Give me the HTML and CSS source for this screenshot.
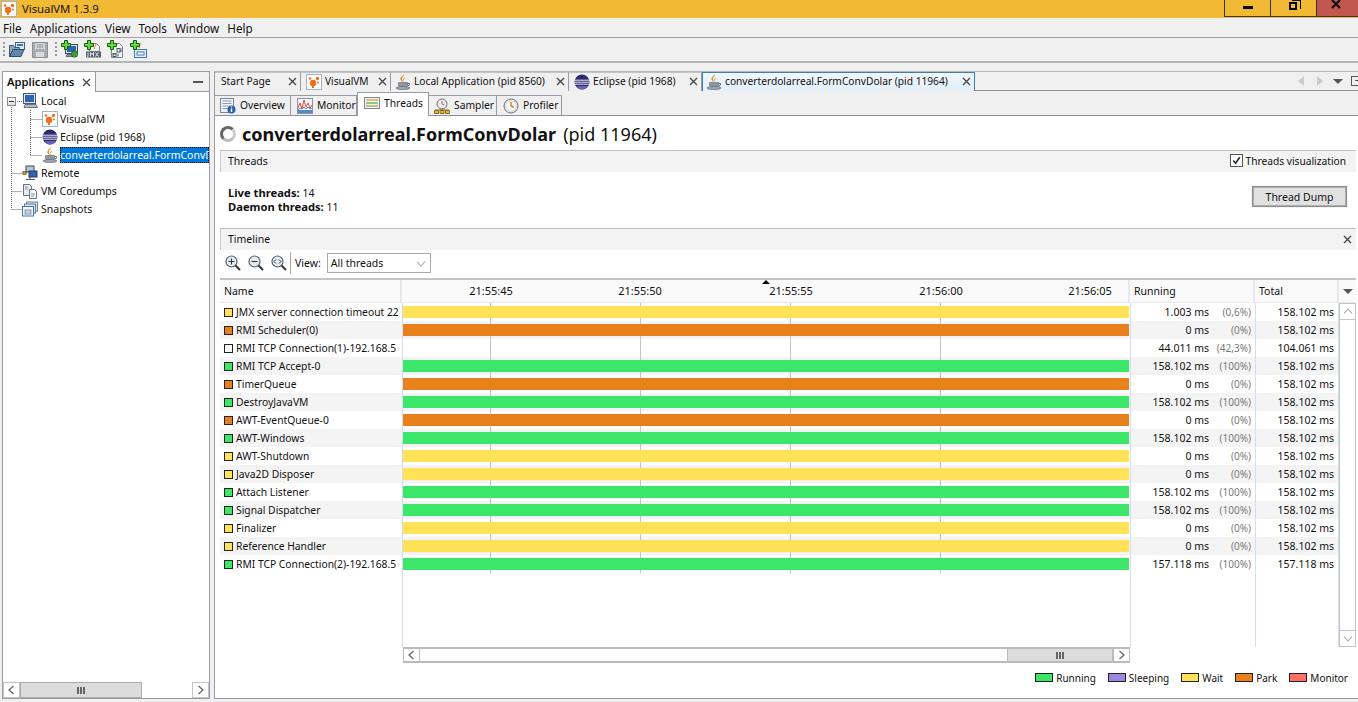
FILE: index.html
```html
<!DOCTYPE html>
<html lang="en">
<head>
<meta charset="utf-8">
<title>VisualVM 1.3.9</title>
<link rel="stylesheet" href="styles.css">
</head>
<body>
<svg class="defs" width="0" height="0" aria-hidden="true">
  <defs>
    <symbol id="i-vm" viewBox="0 0 16 16"><rect x=".5" y=".5" width="15" height="15" fill="#fff" stroke="#9fb4c8"/><circle cx="7" cy="9" r="3.2" fill="#ee6f1c"/><circle cx="11.5" cy="4.5" r="1.7" fill="#ee6f1c"/><circle cx="4" cy="4.5" r="1.3" fill="#ee6f1c"/><circle cx="12" cy="8.5" r="1" fill="#ee6f1c"/><path d="M7 11v3" stroke="#ee6f1c" stroke-width="2"/></symbol>
    <symbol id="i-java" viewBox="0 0 16 16"><path d="M9 0c1 2-3 3-2 6 .4 1 1 1.500 1 2-1-.5-3-1.500-2.600-3.500C5.800 2.500 8.500 2 9 0z" fill="#e8801c"/><path d="M10 3.500c0 1.500-2 2-1 4.500-.8-.5-1.500-2-.7-3 .5-.6 1.200-1 1.700-1.500z" fill="#e8a01c"/><path d="M3.500 8.500h9v2.500c0 1.500-2 2.500-4.500 2.500s-4.500-1-4.500-2.500z" fill="#8d98a4" stroke="#5d6670" stroke-width=".6"/><ellipse cx="8" cy="14" rx="7" ry="1.600" fill="#9aa4ae" stroke="#5d6670" stroke-width=".6"/><path d="M12.500 9.500h2v1.500l-2 1" fill="none" stroke="#5d6670"/></symbol>
    <symbol id="i-eclipse" viewBox="0 0 16 16"><circle cx="8" cy="8" r="7.500" fill="#2c2a6e"/><path d="M1 6.200h14M.6 8.200h14.800M1 10.200h14" stroke="#e8e8f4" stroke-width="1"/><path d="M2 12h12c-1.500 2-3.500 3.500-6 3.500S3.500 14 2 12z" fill="#6a60b8"/></symbol>
    <symbol id="i-local" viewBox="0 0 16 16"><rect x="1.500" y=".5" width="12" height="10" fill="#dfe6ee" stroke="#4a5868"/><rect x="3" y="2" width="9" height="7" fill="#2f63b5"/><path d="M3 11.500h11l1.500 3H2z" fill="#b8bec6" stroke="#4a5868" stroke-width=".8"/></symbol>
    <symbol id="i-remote" viewBox="0 0 16 16"><path d="M0 8h5M8 11v4M4 14.500h9" stroke="#556" stroke-width="1"/><rect x="4" y="1" width="8" height="6" fill="#b8c6d8" stroke="#3d4a5a"/><rect x="7" y="6" width="8" height="6" fill="#2f63b5" stroke="#2d3a4a"/><rect x="1" y="6.500" width="3" height="3" fill="#d9942a" stroke="#6a4a10" stroke-width=".6"/></symbol>
    <symbol id="i-core" viewBox="0 0 16 16"><path d="M1.500 1.500h6l2 2v9h-8z" fill="#e8ebef" stroke="#6a7480"/><path d="M7.500 6.500h5l2 2v7h-7z" fill="#f4f6f8" stroke="#6a7480"/><path d="M3 4h3M3 6h3M9 11h4M9 13h3" stroke="#8a94a0"/></symbol>
    <symbol id="i-snap" viewBox="0 0 16 16"><rect x="4.500" y="1" width="11" height="9" fill="#e3e9f0" stroke="#6a7c90"/><rect x="2.500" y="3" width="11" height="9" fill="#dde6f0" stroke="#5a7ca0"/><rect x=".5" y="5.500" width="11" height="9.500" fill="#f0f4f8" stroke="#3f78b0"/><rect x="3" y="9" width="6" height="4" fill="#c8d4e0" stroke="#6a7c90" stroke-width=".7"/></symbol>
    <symbol id="i-overview" viewBox="0 0 16 16"><rect x=".5" y=".5" width="13" height="14" fill="#eef1f4" stroke="#7b8794"/><path d="M2.500 3h9M2.500 5.500h9M2.500 8h6M2.500 10.500h5" stroke="#8ea0b2"/><circle cx="11.500" cy="11.500" r="4" fill="#2a5fb0"/><path d="M11.500 10.500v3.500" stroke="#fff" stroke-width="1.500"/><path d="M11.500 8.500v1" stroke="#fff" stroke-width="1.300"/></symbol>
    <symbol id="i-monitor" viewBox="0 0 16 16"><rect x=".5" y=".5" width="15" height="15" fill="#f3f5f8" stroke="#8794a4"/><path d="M1 10l2-5 2 6 2-9 2 7 2-4 2 5 2-3" fill="none" stroke="#d8503a"/><path d="M1 15v-3h14v3z" fill="#5a86c8"/><path d="M1 12l2-2 2 1 2-2 2 2 2-2 2 2 2-1" fill="none" stroke="#5a86c8"/></symbol>
    <symbol id="i-threads" viewBox="0 0 16 16"><rect x=".5" y="2.500" width="15" height="11" fill="#f3f5f3" stroke="#7b8794"/><path d="M2 5h12" stroke="#e8a01c" stroke-width="1.300"/><path d="M2 8h12" stroke="#46b060" stroke-width="1.300"/><path d="M2 11h12" stroke="#b0a050" stroke-width="1.300"/></symbol>
    <symbol id="i-sampler" viewBox="0 0 16 16"><circle cx="8" cy="6" r="5" fill="#e8ecf0" stroke="#68737f"/><path d="M8 3v3l2 1" fill="none" stroke="#c8542a"/><path d="M1 12h14M8 10v2" stroke="#8a6a20"/><path d="M.5 12.500h4v3h-4zM6 12.500h4v3H6zM11.500 12.500h4v3h-4z" fill="#e8b840" stroke="#8a6a20"/></symbol>
    <symbol id="i-profiler" viewBox="0 0 16 16"><circle cx="8" cy="8" r="7" fill="#eef1f4" stroke="#68737f"/><circle cx="8" cy="8" r="5.300" fill="#fbfbfb" stroke="#b8c0c8" stroke-width=".6"/><path d="M8 4v4l3 1.500" fill="none" stroke="#e07a20" stroke-width="1.400"/></symbol>
    <symbol id="i-close" viewBox="0 0 9 9"><path d="M1 1l7 7M8 1l-7 7" stroke="#444" stroke-width="1.300" fill="none"/></symbol>
    <symbol id="i-folder" viewBox="0 0 16 16"><rect x="6.500" y=".5" width="9" height="7" fill="#dfe8f0" stroke="#46627e"/><path d="M8 3h6" stroke="#3b78b8" stroke-width="2"/><path d="M.5 3.500h4l1 2h5v2H4L.5 14.500z" fill="#8fa6bc" stroke="#3c5874"/><path d="M4 7.500h11l-3 7H.5z" fill="#5f88ae" stroke="#2f4c68"/></symbol>
    <symbol id="i-floppy" viewBox="0 0 16 16"><path d="M.5.500h15v15H.5z" fill="#a9adb0" stroke="#8b8f92"/><rect x="3" y="1" width="10" height="6" fill="#d0d3d5"/><path d="M5 3h6M5 5h6" stroke="#95999c"/><rect x="4" y="10" width="8" height="5" fill="#d8dadc"/></symbol>
    <symbol id="i-addhost" viewBox="0 0 16 16"><rect x="3.500" y="2.500" width="12" height="9" fill="#dfe6ee" stroke="#39485a"/><rect x="5" y="4" width="9" height="6" fill="#2f63b5"/><path d="M5 12.500h9l1 2H4z" fill="#8f98a2" stroke="#39485a" stroke-width=".7"/><circle cx="12.500" cy="12" r="3.300" fill="#3f9a3a" stroke="#1f5a20" stroke-width=".6"/></symbol>
    <symbol id="i-addjmx" viewBox="0 0 16 16"><path d="M4.500 1.500h7l3 3v5h-10z" fill="#eef0f2" stroke="#7a8490"/><path d="M11 2c0 2-2 2.500-1.500 5" stroke="#e8801c" fill="none"/><rect x="1" y="9.500" width="15" height="6" fill="#59636e"/><path d="M3 10.500v4l-1 .5M5.500 14.500v-4l1.500 2 1.500-2v4M10.500 10.500l3 4M13.500 10.500l-3 4" fill="none" stroke="#f2f2f2" stroke-width=".9"/></symbol>
    <symbol id="i-addcore" viewBox="0 0 16 16"><path d="M3.500 1.500h8l3 3v11h-11z" fill="#f1f3f5" stroke="#7a8490"/><rect x="9" y="6.500" width="3" height="3.500" fill="none" stroke="#4e5862"/><path d="M13 6.500v3.500M5 12h3M10 11.500v3" stroke="#4e5862"/><rect x="5" y="11.500" width="3" height="3" fill="none" stroke="#4e5862"/></symbol>
    <symbol id="i-addsnap" viewBox="0 0 16 16"><path d="M9 1c1 2-1.500 2.500-.5 5" stroke="#e8801c" fill="none"/><rect x="3.500" y="7.500" width="12" height="8" fill="#e4edf6" stroke="#3f78b0"/><rect x="6" y="10" width="7" height="3" fill="#fff" stroke="#3f78b0"/></symbol>
    <symbol id="i-plus" viewBox="0 0 10 10"><path d="M3.500.5h3v3h3v3h-3v3h-3v-3h-3v-3h3z" fill="#62d83e" stroke="#14600f"/></symbol>
    <symbol id="i-zoomin" viewBox="0 0 16 16"><circle cx="6.500" cy="6.500" r="5.500" fill="#e6ebee" stroke="#55616d" stroke-width="1.200"/><path d="M10.500 10.500l4.500 4.500" stroke="#333" stroke-width="2"/><path d="M3.500 6.500h6M6.500 3.500v6" stroke="#2f3a46" stroke-width="1.100"/></symbol>
    <symbol id="i-zoomout" viewBox="0 0 16 16"><circle cx="6.500" cy="6.500" r="5.500" fill="#e6ebee" stroke="#55616d" stroke-width="1.200"/><path d="M10.500 10.500l4.500 4.500" stroke="#333" stroke-width="2"/><path d="M3.500 6.500h6" stroke="#2f3a46" stroke-width="1.100"/></symbol>
    <symbol id="i-zoomfit" viewBox="0 0 16 16"><circle cx="6.500" cy="6.500" r="5.500" fill="#e6ebee" stroke="#55616d" stroke-width="1.200"/><path d="M10.500 10.500l4.500 4.500" stroke="#333" stroke-width="2"/><path d="M5 4.500L3 6.500l2 2M8 4.500l2 2-2 2" fill="none" stroke="#2f3a46"/></symbol>
    <symbol id="i-left" viewBox="0 0 9 10"><path d="M6.500 1L2 5l4.500 4" fill="none" stroke="#666" stroke-width="1.300"/></symbol>
    <symbol id="i-right" viewBox="0 0 9 10"><path d="M2.500 1L7 5 2.500 9" fill="none" stroke="#666" stroke-width="1.300"/></symbol>
    <symbol id="i-up" viewBox="0 0 10 9"><path d="M1 6.500L5 2l4 4.500" fill="none" stroke="#a8a8a8" stroke-width="1.100"/></symbol>
    <symbol id="i-down" viewBox="0 0 10 9"><path d="M1 2.500L5 7l4-4.500" fill="none" stroke="#a8a8a8" stroke-width="1.100"/></symbol>
  </defs>
</svg>

<header class="titlebar">
  <svg class="title-icon"><use href="#i-vm"/></svg>
  <span class="title-text">VisualVM 1.3.9</span>
  <div class="winbtns">
    <div class="winbtn"><span class="glyph-min"></span></div>
    <div class="winbtn"><span class="glyph-restore"></span></div>
    <div class="winbtn winbtn-close"><svg class="glyph-x" viewBox="0 0 10 9"><path d="M1 0l8 8M9 0L1 8" stroke="#111" stroke-width="2.200"/></svg></div>
  </div>
</header>

<nav class="menubar">
  <span>File</span><span>Applications</span><span>View</span><span>Tools</span><span>Window</span><span>Help</span>
</nav>

<div class="toolbar">
  <span class="grip"></span>
  <svg class="tool"><use href="#i-folder"/></svg>
  <svg class="tool"><use href="#i-floppy"/></svg>
  <span class="grip"></span>
  <span class="tool-add"><svg class="tool"><use href="#i-addhost"/></svg><svg class="plus"><use href="#i-plus"/></svg></span>
  <span class="tool-add"><svg class="tool"><use href="#i-addjmx"/></svg><svg class="plus"><use href="#i-plus"/></svg></span>
  <span class="tool-add"><svg class="tool"><use href="#i-addcore"/></svg><svg class="plus"><use href="#i-plus"/></svg></span>
  <span class="tool-add"><svg class="tool"><use href="#i-addsnap"/></svg><svg class="plus"><use href="#i-plus"/></svg></span>
</div>

<main class="workspace">
  <aside class="apps">
    <div class="apps-head">
      <div class="apps-tab"><span>Applications</span><svg class="x"><use href="#i-close"/></svg></div>
      <div class="apps-rest"><span class="apps-min"></span></div>
    </div>
    <div class="tree">
      <svg class="tree-lines" width="60" height="125">
        <path d="M11.500 13V117.500M15 9.500H22M11.500 81.500H22M11.500 99.500H22M11.500 117.500H22M30.500 18V63.500M30.500 27.500H42M30.500 45.500H42M30.500 63.500H42" fill="none" stroke="#666" stroke-dasharray="1 1"/>
      </svg>
      <div class="tree-row lvl0"><span class="expander"></span><svg class="ticon"><use href="#i-local"/></svg><span class="tlabel">Local</span></div>
      <div class="tree-row lvl1"><svg class="ticon"><use href="#i-vm"/></svg><span class="tlabel">VisualVM</span></div>
      <div class="tree-row lvl1"><svg class="ticon"><use href="#i-eclipse"/></svg><span class="tlabel">Eclipse (pid 1968)</span></div>
      <div class="tree-row lvl1"><svg class="ticon"><use href="#i-java"/></svg><span class="selected">converterdolarreal.FormConvD</span></div>
      <div class="tree-row lvl0"><svg class="ticon"><use href="#i-remote"/></svg><span class="tlabel">Remote</span></div>
      <div class="tree-row lvl0"><svg class="ticon"><use href="#i-core"/></svg><span class="tlabel">VM Coredumps</span></div>
      <div class="tree-row lvl0"><svg class="ticon"><use href="#i-snap"/></svg><span class="tlabel">Snapshots</span></div>
    </div>
    <div class="hscroll apps-scroll">
      <span class="sbtn"><svg class="arrow"><use href="#i-left"/></svg></span>
      <span class="thumb thumb-apps"><i></i><i></i><i></i></span>
      <span class="track"></span>
      <span class="sbtn"><svg class="arrow"><use href="#i-right"/></svg></span>
    </div>
  </aside>

  <section class="doc">
    <div class="doc-tabs">
      <div class="dtab w-start"><span class="dtab-label">Start Page</span><svg class="x"><use href="#i-close"/></svg></div>
      <div class="dtab w-vm"><svg class="dicon"><use href="#i-vm"/></svg><span class="dtab-label">VisualVM</span><svg class="x"><use href="#i-close"/></svg></div>
      <div class="dtab w-local"><svg class="dicon"><use href="#i-java"/></svg><span class="dtab-label">Local Application (pid 8560)</span><svg class="x"><use href="#i-close"/></svg></div>
      <div class="dtab w-eclipse"><svg class="dicon"><use href="#i-eclipse"/></svg><span class="dtab-label">Eclipse (pid 1968)</span><svg class="x"><use href="#i-close"/></svg></div>
      <div class="dtab dtab-active w-conv"><svg class="dicon"><use href="#i-java"/></svg><span class="dtab-label">converterdolarreal.FormConvDolar (pid 11964)</span><svg class="x"><use href="#i-close"/></svg></div>
      <div class="doc-nav">
        <span class="tri-left"></span><span class="tri-right"></span><span class="tri-down"></span>
        <span class="restore-mini"></span>
      </div>
    </div>

    <div class="view-tabs">
      <div class="vtab w-ov"><svg class="dicon"><use href="#i-overview"/></svg>Overview</div>
      <div class="vtab w-mon"><svg class="dicon"><use href="#i-monitor"/></svg>Monitor</div>
      <div class="vtab vtab-active w-thr"><svg class="dicon"><use href="#i-threads"/></svg>Threads</div>
      <div class="vtab w-sam"><svg class="dicon"><use href="#i-sampler"/></svg>Sampler</div>
      <div class="vtab w-pro"><svg class="dicon"><use href="#i-profiler"/></svg>Profiler</div>
    </div>

    <div class="content">
      <h1 class="heading"><span class="spinner"></span><b>converterdolarreal.FormConvDolar</b><span class="pid">(pid 11964)</span></h1>

      <div class="band"><span>Threads</span>
        <label class="viz"><span class="check"><svg viewBox="0 0 12 12"><path d="M2.500 6l2.500 3 4.500-6.500" fill="none" stroke="#222" stroke-width="1.600"/></svg></span>Threads visualization</label>
      </div>
      <div class="stats">
        <div class="stat-text">
          <div><b>Live threads:</b> 14</div>
          <div><b>Daemon threads:</b> 11</div>
        </div>
        <div class="dump">Thread Dump</div>
      </div>

      <div class="band band-tl"><span>Timeline</span><svg class="x band-x"><use href="#i-close"/></svg></div>
      <div class="tl-tools">
        <svg class="zicon"><use href="#i-zoomin"/></svg>
        <svg class="zicon"><use href="#i-zoomout"/></svg>
        <svg class="zicon"><use href="#i-zoomfit"/></svg>
        <span class="tl-sep"></span>
        <span>View:</span>
        <div class="combo"><span>All threads</span><svg class="combo-arrow"><use href="#i-down"/></svg></div>
      </div>

      <div class="thead">
        <div class="th">Name</div>
        <div class="th th-time">
          <span>21:55:45</span><span>21:55:50</span><span>21:55:55</span><span>21:56:00</span><span>21:56:05</span>
          <i class="now"></i>
        </div>
        <div class="th">Running</div>
        <div class="th">Total</div>
        <div class="th th-corner"><span class="tri-down"></span></div>
      </div>

      <div class="tbody">
        <div class="rows">
          <div class="row"><div class="c-name"><i class="sw wait"></i>JMX server connection timeout 22</div><div class="c-bar"><i class="bar wait"></i></div><div class="c-run">1.003 ms<em>(0,6%)</em></div><div class="c-total">158.102 ms</div></div>
          <div class="row"><div class="c-name"><i class="sw park"></i>RMI Scheduler(0)</div><div class="c-bar"><i class="bar park"></i></div><div class="c-run">0 ms<em>(0%)</em></div><div class="c-total">158.102 ms</div></div>
          <div class="row"><div class="c-name"><i class="sw"></i>RMI TCP Connection(1)-192.168.5</div><div class="c-bar"></div><div class="c-run">44.011 ms<em>(42,3%)</em></div><div class="c-total">104.061 ms</div></div>
          <div class="row"><div class="c-name"><i class="sw run"></i>RMI TCP Accept-0</div><div class="c-bar"><i class="bar run"></i></div><div class="c-run">158.102 ms<em>(100%)</em></div><div class="c-total">158.102 ms</div></div>
          <div class="row"><div class="c-name"><i class="sw park"></i>TimerQueue</div><div class="c-bar"><i class="bar park"></i></div><div class="c-run">0 ms<em>(0%)</em></div><div class="c-total">158.102 ms</div></div>
          <div class="row"><div class="c-name"><i class="sw run"></i>DestroyJavaVM</div><div class="c-bar"><i class="bar run"></i></div><div class="c-run">158.102 ms<em>(100%)</em></div><div class="c-total">158.102 ms</div></div>
          <div class="row"><div class="c-name"><i class="sw park"></i>AWT-EventQueue-0</div><div class="c-bar"><i class="bar park"></i></div><div class="c-run">0 ms<em>(0%)</em></div><div class="c-total">158.102 ms</div></div>
          <div class="row"><div class="c-name"><i class="sw run"></i>AWT-Windows</div><div class="c-bar"><i class="bar run"></i></div><div class="c-run">158.102 ms<em>(100%)</em></div><div class="c-total">158.102 ms</div></div>
          <div class="row"><div class="c-name"><i class="sw wait"></i>AWT-Shutdown</div><div class="c-bar"><i class="bar wait"></i></div><div class="c-run">0 ms<em>(0%)</em></div><div class="c-total">158.102 ms</div></div>
          <div class="row"><div class="c-name"><i class="sw wait"></i>Java2D Disposer</div><div class="c-bar"><i class="bar wait"></i></div><div class="c-run">0 ms<em>(0%)</em></div><div class="c-total">158.102 ms</div></div>
          <div class="row"><div class="c-name"><i class="sw run"></i>Attach Listener</div><div class="c-bar"><i class="bar run"></i></div><div class="c-run">158.102 ms<em>(100%)</em></div><div class="c-total">158.102 ms</div></div>
          <div class="row"><div class="c-name"><i class="sw run"></i>Signal Dispatcher</div><div class="c-bar"><i class="bar run"></i></div><div class="c-run">158.102 ms<em>(100%)</em></div><div class="c-total">158.102 ms</div></div>
          <div class="row"><div class="c-name"><i class="sw wait"></i>Finalizer</div><div class="c-bar"><i class="bar wait"></i></div><div class="c-run">0 ms<em>(0%)</em></div><div class="c-total">158.102 ms</div></div>
          <div class="row"><div class="c-name"><i class="sw wait"></i>Reference Handler</div><div class="c-bar"><i class="bar wait"></i></div><div class="c-run">0 ms<em>(0%)</em></div><div class="c-total">158.102 ms</div></div>
          <div class="row"><div class="c-name"><i class="sw run"></i>RMI TCP Connection(2)-192.168.5</div><div class="c-bar"><i class="bar run"></i></div><div class="c-run">157.118 ms<em>(100%)</em></div><div class="c-total">157.118 ms</div></div>
          <div class="row row-fill"><div class="c-name"></div><div class="c-blank"></div><div class="c-run"></div><div class="c-total"></div></div>
        </div>
        <div class="vscroll">
          <span class="sbtn-v"><svg class="arrow-v"><use href="#i-up"/></svg></span>
          <span class="vtrack"></span>
          <span class="sbtn-v"><svg class="arrow-v"><use href="#i-down"/></svg></span>
        </div>
      </div>

      <div class="hscroll tl-scroll">
        <span class="sbtn"><svg class="arrow"><use href="#i-left"/></svg></span>
        <span class="track"></span>
        <span class="thumb thumb-tl"><i></i><i></i><i></i></span>
        <span class="sbtn"><svg class="arrow"><use href="#i-right"/></svg></span>
      </div>

      <div class="legend">
        <span class="lg"><i class="lg-sw run"></i>Running</span>
        <span class="lg"><i class="lg-sw sleep"></i>Sleeping</span>
        <span class="lg"><i class="lg-sw wait"></i>Wait</span>
        <span class="lg"><i class="lg-sw park"></i>Park</span>
        <span class="lg"><i class="lg-sw mon"></i>Monitor</span>
      </div>
    </div>
  </section>
</main>
</body>
</html>
```
FILE: styles.css
```css
* { box-sizing: border-box; }
html, body { margin: 0; padding: 0; }
body {
  width: 1358px;
  height: 702px;
  overflow: hidden;
  background: #f0f0f0;
  color: #111;
  font: 10.5px/14px "Noto Sans", "Open Sans", sans-serif;
  display: flex;
  flex-direction: column;
}
.defs { position: absolute; }
svg { display: block; flex: none; }

/* title bar */
.titlebar { height: 18px; flex: none; background: #f2b935; display: flex; align-items: center; }
.title-icon { width: 16px; height: 16px; margin: 0 5px 0 1px; }
.title-text { font-size: 11.3px; }
.winbtns { margin-left: auto; display: flex; height: 17px; align-self: flex-start; border-left: 1px solid #333; border-bottom: 1px solid #333; }
.winbtn { width: 46px; border-right: 1px solid #333; display: flex; justify-content: center; position: relative; }
.winbtn-close { width: 41px; background: #c1574f; border-right: 0; }
.glyph-x { width: 10px; height: 9px; margin-right: 4px; }
.glyph-min { width: 10px; height: 3px; background: #000; margin-top: 6px; }
.glyph-restore { width: 8px; height: 8px; border: 2px solid #000; margin: 2px 2px 0 0; position: relative; }
.glyph-restore::after { content: ""; position: absolute; left: 1px; top: -4px; width: 8px; height: 8px; border-top: 1px solid #000; border-right: 1px solid #000; }

/* menu + toolbar */
.menubar { height: 20px; flex: none; padding: 0 0 0 3px; display: flex; align-items: center; gap: 8px; font-size: 11.7px; border-bottom: 1px solid #a2a2a2; }
.toolbar { height: 25px; flex: none; display: flex; align-items: center; padding-left: 3px; border-bottom: 2px solid #b4b4b4; }
.grip { width: 2px; height: 15px; margin-right: 4px; background: repeating-linear-gradient(#999 0 2px, transparent 2px 4px); }
.tool { width: 16px; height: 16px; margin-right: 7px; }
.tool + .grip { margin-right: 5px; }
.tool-add { position: relative; width: 16px; height: 16px; margin-right: 7px; }
.tool-add .tool { margin: 0; }
.plus { position: absolute; left: -1px; top: -2px; width: 10px; height: 10px; }

/* workspace */
.workspace { flex: 1; min-height: 0; display: flex; gap: 4px; padding: 8px 0 3px 2px; }

/* applications panel */
.apps { width: 208px; flex: none; border: 1px solid #9a9aa4; background: #fff; display: flex; flex-direction: column; position: relative; }
.apps-head { height: 20px; flex: none; display: flex; }
.apps-tab { width: 93px; display: flex; align-items: center; justify-content: space-between; padding: 0 4px; border-right: 1px solid #9a9aa4; background: #fff; }
.apps-tab span { font-size: 11.2px; font-weight: 600; }
.apps-rest { flex: 1; background: #f0f0f0; border-bottom: 1px solid #9a9aa4; display: flex; align-items: center; justify-content: flex-end; padding-right: 6px; }
.apps-min { width: 10px; height: 2px; background: #555; }
.x { width: 9px; height: 9px; }
.tree { flex: 1; position: relative; }
.tree-lines { position: absolute; left: -3px; top: 0; }
.tree-row { height: 18px; display: flex; align-items: center; position: relative; white-space: nowrap; overflow: hidden; }
.lvl0 { padding-left: 19px; }
.lvl1 { padding-left: 39px; }
.expander { position: absolute; left: 4px; top: 5px; width: 9px; height: 9px; border: 1px solid #8a8a8a; background: linear-gradient(#fff, #ddd); }
.expander::after { content: ""; position: absolute; left: 1px; top: 3px; width: 5px; height: 1px; background: #333; }
.ticon { width: 16px; height: 16px; margin-right: 3px; }
.lvl1 .ticon { margin-right: 2px; }
.tlabel { flex: none; }
.selected { flex: 1; min-width: 0; background: #0078d7; color: #fff; outline: 1px dotted #000; outline-offset: -1px; padding: 1px 0; }
.hscroll { display: flex; flex: none; height: 16px; background: #fff; }
.sbtn { width: 17px; flex: none; border: 2px solid #bbb; border-left-width: 1px; border-right-width: 1px; display: flex; align-items: center; justify-content: center; background: #fff; }
.arrow { width: 9px; height: 10px; }
.track { flex: 1; border-top: 2px solid #bbb; border-bottom: 2px solid #bbb; background: #fff; }
.thumb { flex: none; background: #dcdcdc; border: 1px solid #aaa; display: flex; align-items: center; justify-content: center; gap: 1px; }
.thumb i { width: 2px; height: 7px; background: #666; }
.thumb-apps { width: 122px; }
.apps-scroll .track { border-top-width: 0; border-bottom-width: 0; }
.apps-scroll .sbtn { border-width: 1px; border-color: #c4c4c4; }

/* document */
.doc { flex: 1; min-width: 0; display: flex; flex-direction: column; border-left: 1px solid #9a9aa4; border-bottom: 1px solid #9a9aa4; border-top: 1px solid #bbb; background: #f0f0f0; }
.doc-tabs { height: 19px; flex: none; display: flex; border-bottom: 1px solid #8e8e9c; position: relative; font-size: 10.2px; }
.dtab { height: 19px; display: flex; align-items: center; padding: 0 3px 3px 6px; flex: none; border-top: 1px solid #c4c4c4; border-right: 1px solid #9a9aa4; background: #f0f0f0; }
.dtab .x { margin-left: auto; margin-top: 2px; }
.dtab-label { white-space: nowrap; }
.dicon { width: 16px; height: 16px; margin-right: 3px; }
.dtab .dicon { margin-top: 2px; }
.w-start { width: 86px; }
.w-vm { width: 90px; padding-left: 5px; }
.w-local { width: 178px; padding-left: 4px; }
.w-eclipse { width: 133px; padding-left: 5px; }
.w-conv { width: 273px; padding-left: 3px; }
.dtab-active { background: linear-gradient(#f2f7fc, #e2eef9); border: 1px solid #3c7fb1; border-bottom: 0; }
.doc-nav { position: absolute; right: -2px; top: 0; height: 18px; display: flex; align-items: center; }
.tri-left, .tri-right { width: 0; height: 0; border-top: 5px solid transparent; border-bottom: 5px solid transparent; }
.tri-left { border-right: 6px solid #ccc; margin-right: 13px; }
.tri-right { border-left: 6px solid #ccc; margin-right: 10px; }
.tri-down { width: 0; height: 0; border-left: 5px solid transparent; border-right: 5px solid transparent; border-top: 5px solid #555; display: block; }
.restore-mini { width: 9px; height: 10px; margin-left: 8px; border: 1px solid #555; border-right: 0; background: linear-gradient(#555, #555) 3px 3px / 6px 1px no-repeat; }

.view-tabs { height: 24px; flex: none; display: flex; align-items: flex-end; font-size: 10.3px; }
.vtab { height: 20px; display: flex; align-items: center; padding: 0 0 2px 5px; flex: none; border: 1px solid #9a9aa4; border-left: 0; background: #f0f0f0; border-bottom: 0; }
.vtab .dicon { margin-top: 2px; }
.w-ov { width: 76px; padding-left: 5px; }
.w-mon { width: 66px; padding-left: 6px; }
.w-thr { width: 72px; padding-left: 6px; }
.w-sam { width: 68px; padding-left: 5px; }
.w-pro { width: 65px; padding-left: 6px; }
.vtab .dicon { margin-right: 4px; }
.vtab-active { height: 24px; background: #fff; border-left: 1px solid #9a9aa4; margin-bottom: -1px; position: relative; z-index: 1; padding-bottom: 3px; }
.vtab-active .dicon { margin-top: 0; }

.content { flex: 1; min-height: 0; background: #fff; border-top: 1px solid #8e8e9c; padding: 0 2px 0 5px; display: flex; flex-direction: column; }
.heading { margin: 0; height: 34px; padding-top: 1px; flex: none; display: flex; align-items: center; font-size: 18px; font-weight: 400; white-space: nowrap; }
.spinner { width: 16px; height: 16px; border-radius: 50%; border: 3px solid #666; border-right-color: #ccc; border-bottom-color: #bbb; margin-right: 6px; }
.heading b { font-weight: 700; }
.pid { font-weight: 400; margin-left: 7px; }
.band { height: 22px; flex: none; display: flex; align-items: center; justify-content: space-between; padding: 0 10px 2px 7px; background: #f3f3f3; border-top: 1px solid #c0c0c0; border-left: 1px solid #c8c8c8; }
.viz { display: flex; align-items: center; font-size: 10.2px; }
.check { width: 13px; height: 13px; border: 1px solid #555; background: #fff; margin-right: 3px; }
.stats { height: 56px; flex: none; display: flex; justify-content: space-between; align-items: flex-start; padding: 14px 9px 0 8px; }
.stat-text b { font-weight: 700; font-size: 11.2px; }
.dump { width: 95px; height: 21px; display: flex; align-items: center; justify-content: center; background: #e1e1e1; border: 1px solid #8f8f8f; outline: 1px solid #f4f4f4; box-shadow: inset 0 0 0 1px #adadad; }
.band-tl { padding-right: 4px; }
.band-tl .band-x { margin-top: 2px; }
.tl-tools { height: 28px; flex: none; display: flex; align-items: center; padding: 0 0 2px 5px; gap: 7px; }
.zicon { width: 16px; height: 16px; }
.tl-sep { width: 1px; height: 22px; background: #aaa; margin: 0 -3px 0 -4px; }
.combo { width: 104px; height: 20px; border: 1px solid #a8a8a8; display: flex; align-items: center; justify-content: space-between; padding: 0 4px 0 3px; margin-left: -1px; }
.combo-arrow { width: 10px; height: 9px; }

.thead { height: 25px; flex: none; display: grid; grid-template-columns: 182px 728px 125px 84px 17px; border-top: 2px solid #c4c4c4; background: #fff; }
.th { background: #fafafa; border-right: 2px solid #e8e8e8; border-bottom: 1px solid #e8e8e8; padding: 0 4px; display: flex; align-items: center; }
.th-time { position: relative; display: block; padding: 0; }
.th-time span { position: absolute; top: 4px; width: 60px; text-align: center; font-size: 11px; }
.th-time span:nth-child(1) { left: 59px; }
.th-time span:nth-child(2) { left: 208px; }
.th-time span:nth-child(3) { left: 359px; }
.th-time span:nth-child(4) { left: 509px; }
.th-time span:nth-child(5) { left: 658px; }
.now { position: absolute; left: 360px; top: 0; width: 0; height: 0; border-left: 4px solid transparent; border-right: 4px solid transparent; border-bottom: 4px solid #000; }
.th-corner { padding: 0; justify-content: center; border-right: 0; }

.tbody { flex: 1; min-height: 0; display: flex; }
.rows { flex: 1; min-width: 0; display: flex; flex-direction: column; }
.row { height: 18px; flex: none; display: grid; grid-template-columns: 182px 728px 125px 84px; }
.row:nth-child(even) { background: #f4f4f4; }
.row-fill { flex: 1; background: #fff !important; }
.c-name { display: flex; align-items: center; padding-left: 4px; white-space: nowrap; overflow: hidden; font-size: 10.3px; }
.sw { width: 9px; height: 9px; border: 1px solid #222; margin-right: 3px; flex: none; background: #fff; }
.sw.wait { background: #ffe257; }
.sw.park { background: #e8801c; }
.sw.run { background: #3be669; }
.c-bar { border-left: 1px solid #d5dcf5; padding: 3px 1px 3px 0; background: repeating-linear-gradient(90deg, transparent 0 149px, #c4c4c4 149px 150px) -62px 0; }
.c-blank { border-left: 1px solid #d5dcf5; }
.bar { display: block; height: 12px; }
.run { background: #3be669; }
.wait { background: #ffe257; }
.park { background: #e8801c; }
.sleep { background: #9c88de; }
.mon { background: #ff7067; }
.c-run { display: flex; justify-content: flex-end; align-items: center; border-left: 1px solid #d5dcf5; padding-right: 4px; }
.c-run em { font-style: normal; color: #7a7a7a; width: 42px; text-align: right; font-size: 10px; }
.c-total { text-align: right; border-left: 1px solid #d5dcf5; padding-right: 5px; line-height: 18px; }
.vscroll { width: 18px; flex: none; display: flex; flex-direction: column; border-left: 1px solid #d5dcf5; }
.sbtn-v { height: 17px; border: 1px solid #c4c4c4; display: flex; align-items: center; justify-content: center; }
.vtrack { flex: 1; border-right: 1px solid #c4c4c4; border-left: 1px solid #c4c4c4; }
.arrow-v { width: 10px; height: 9px; }

.tl-scroll { margin-left: 183px; width: 727px; height: 16px; }
.thumb-tl { width: 106px; border-width: 2px 1px; border-color: #bbb; }

.legend { height: 35px; flex: none; display: flex; justify-content: flex-end; align-items: center; gap: 12px; padding: 0 8px 6px 0; font-size: 10px; }
.lg { display: flex; align-items: center; }
.lg-sw { width: 18px; height: 9px; border: 1px solid #222; margin-right: 3px; }
```
